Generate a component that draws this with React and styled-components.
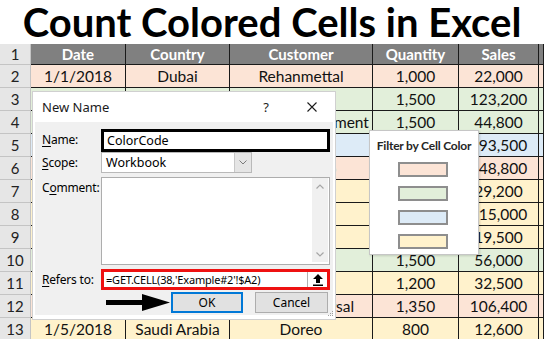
import React from 'react';
import styled, { createGlobalStyle } from 'styled-components';

const GlobalStyle = createGlobalStyle`
  html, body { margin: 0; padding: 0; background: #ffffff; }
  body { width: 544px; height: 339px; overflow: hidden; }
  * { box-sizing: border-box; }
`;

const fills = {
    peach: '#fce4d6',
    green: '#e2efda',
    blue: '#ddebf7',
    yellow: '#fff2cc',
};

// cells that sit fully under the dialog / filter panel are left blank
const rows = [
    { fill: 'peach', cells: ['1/1/2018', 'Dubai', 'Rehanmettal', '1,000', '22,000'] },
    { fill: 'green', cells: ['', '', '', '1,500', '123,200'] },
    { fill: 'green', cells: ['', '', 'Vivid Entertainment', '1,500', '44,800'] },
    { fill: 'blue', cells: ['', '', '', '', '193,500'] },
    { fill: 'peach', cells: ['', '', 'Parle Agro', '', '148,800'] },
    { fill: 'yellow', cells: ['', '', '', '', '29,200'] },
    { fill: 'yellow', cells: ['', '', '', '', '115,000'] },
    { fill: 'yellow', cells: ['', '', '', '', '19,500'] },
    { fill: 'green', cells: ['', '', '', '1,500', '56,000'] },
    { fill: 'yellow', cells: ['', '', '', '1,200', '32,500'] },
    { fill: 'peach', cells: ['', '', 'Alpha Universal', '1,350', '106,400'] },
    { fill: 'yellow', cells: ['1/5/2018', 'Saudi Arabia', 'Doreo', '800', '12,600'] },
];

const headers = ['Date', 'Country', 'Customer', 'Quantity', 'Sales'];

const Page = styled.div`
    position: relative;
    width: 544px;
    height: 339px;
    overflow: hidden;
    background: #ffffff;
    font-family: Lato, "Liberation Sans", sans-serif;
`;

const Title = styled.h1`
    margin: 0;
    height: 44px;
    padding-top: 1px;
    line-height: 43px;
    text-align: center;
    font-size: 40px;
    font-weight: 700;
    color: #000000;
    white-space: nowrap;
`;

const Sheet = styled.div`
    display: grid;
    grid-template-columns: 31px 95px 104px 143px 86px 80px 5px;
    grid-template-rows: 21px;
    grid-auto-rows: 23px;
`;

const RowNum = styled.div`
    background: #e6e6e6;
    border-right: 1px solid #c4c4c4;
    border-bottom: 1px solid #c4c4c4;
    color: #222222;
    font-size: 15px;
    display: flex;
    align-items: center;
    justify-content: center;
`;

const HeadCell = styled.div`
    background: #808080;
    color: #ffffff;
    font-weight: 700;
    font-size: 15px;
    border-right: 1px solid #1a1a1a;
    border-bottom: 1px solid #1a1a1a;
    display: flex;
    align-items: center;
    justify-content: center;
`;

const Cell = styled.div`
    background: ${({ $fill }) => fills[$fill]};
    color: #111111;
    font-size: 15.5px;
    border-right: 1px solid #1a1a1a;
    border-bottom: 1px solid #1a1a1a;
    display: flex;
    align-items: center;
    justify-content: center;
    white-space: nowrap;
`;

const Dialog = styled.div`
    position: absolute;
    left: 32px;
    top: 91px;
    width: 304px;
    height: 229px;
    background: #ffffff;
    border: 1px solid #d0d0d0;
    display: flex;
    flex-direction: column;
    font-family: "Noto Sans", "Liberation Sans", sans-serif;
    font-size: 12px;
    color: #000000;
`;

const TitleBar = styled.div`
    height: 30px;
    display: flex;
    align-items: center;
    padding-left: 9px;
    color: #1b1b1b;
`;

const TitleText = styled.span`
    flex: 1;
    font-size: 13px;
`;

const Help = styled.span`
    font-size: 13px;
    margin-right: 38px;
`;

const CloseIcon = styled.svg`
    margin-right: 18px;
`;

const Body = styled.div`
    position: relative;
    flex: 1;
    margin: 0 2px 4px 2px;
    background: #f0f0f0;
    padding: 7px 3px 0 7px;
    display: flex;
    flex-direction: column;
`;

const FieldRow = styled.div`
    display: grid;
    grid-template-columns: 59px 1fr;
    margin-top: ${({ $top }) => $top}px;
    height: ${({ $h }) => $h}px;
`;

const Label = styled.div`
    padding-top: 3px;
    line-height: 15px;
    font-size: 12px;
    letter-spacing: -0.2px;
    white-space: nowrap;
    u { text-decoration-thickness: 1px; text-underline-offset: 2px; }
`;

const NameInput = styled.div`
    border: 3px solid #000000;
    background: #ffffff;
    padding-left: 3px;
    display: flex;
    align-items: center;
    font-size: 12.5px;
`;

const Select = styled.div`
    width: 151px;
    border: 1px solid #b9b9b9;
    background: #ffffff;
    display: flex;
    align-items: stretch;
`;

const SelectValue = styled.div`
    flex: 1;
    padding-left: 4px;
    display: flex;
    align-items: center;
    font-size: 12.5px;
`;

const SelectButton = styled.div`
    width: 17px;
    background: #e5e5e5;
    border-left: 1px solid #c8c8c8;
    display: flex;
    align-items: center;
    justify-content: center;
`;

const TextArea = styled.div`
    border: 1px solid #adadad;
    background: #ffffff;
    display: flex;
    justify-content: flex-end;
    padding: 0 1px 2px 0;
`;

const ScrollTrack = styled.div`
    width: 16px;
    background: #f0f0f0;
    display: flex;
    flex-direction: column;
    justify-content: space-between;
    align-items: center;
    padding: 6px 0 5px;
`;

const RefInput = styled.div`
    border: 3px solid #ee1111;
    background: #ffffff;
    display: flex;
    align-items: stretch;
`;

const RefValue = styled.div`
    flex: 1;
    padding-left: 2px;
    display: flex;
    align-items: center;
    font-size: 11px;
    letter-spacing: -0.2px;
    white-space: nowrap;
    overflow: hidden;
`;

const CollapseButton = styled.div`
    width: 20px;
    border-left: 1px solid #b0b0b0;
    display: flex;
    align-items: center;
    justify-content: center;
`;

const ButtonRow = styled.div`
    margin-top: 2px;
    height: 21px;
    display: flex;
    justify-content: flex-end;
    align-items: center;
    padding-right: 2px;
`;

const Button = styled.div`
    width: ${({ $w }) => $w}px;
    height: 21px;
    margin-left: ${({ $gap }) => $gap}px;
    background: #e1e1e1;
    border: ${({ $primary }) => ($primary ? '2px solid #0078d7' : '1px solid #adadad')};
    display: flex;
    align-items: center;
    justify-content: center;
    font-size: 12px;
    color: #000000;
`;

const Grip = styled.svg`
    position: absolute;
    right: -1px;
    bottom: -2px;
`;

const FilterBox = styled.div`
    position: absolute;
    left: 369px;
    top: 130px;
    width: 110px;
    height: 125px;
    background: #ffffff;
    border: 1px solid #c6c6c6;
    box-shadow: 1px 1px 2px rgba(0, 0, 0, 0.15);
    display: flex;
    flex-direction: column;
    align-items: center;
    padding-top: 7px;
    font-family: Lato, "Liberation Sans", sans-serif;
`;

const FilterTitle = styled.div`
    font-size: 12px;
    font-weight: 700;
    letter-spacing: -0.2px;
    color: #262626;
    white-space: nowrap;
    margin-bottom: 9px;
`;

const Swatches = styled.div`
    display: flex;
    flex-direction: column;
    gap: 9px;
    margin-left: -3px;
`;

const Swatch = styled.div`
    width: 50px;
    height: 15px;
    background: ${({ $fill }) => fills[$fill]};
    border: 2px solid #8e8e8e;
`;

const App = () => {
    return (
        <Page>
            <GlobalStyle />
            <Title>Count Colored Cells in Excel</Title>
            <Sheet>
                <RowNum>1</RowNum>
                {headers.map((h) => (
                    <HeadCell key={h}>{h}</HeadCell>
                ))}
                <HeadCell />
                {rows.map((row, i) => (
                    <React.Fragment key={i}>
                        <RowNum>{i + 2}</RowNum>
                        {row.cells.map((c, j) => (
                            <Cell key={j} $fill={row.fill}>{c}</Cell>
                        ))}
                        <Cell $fill={row.fill} />
                    </React.Fragment>
                ))}
            </Sheet>

            <Dialog>
                <TitleBar>
                    <TitleText>New Name</TitleText>
                    <Help>?</Help>
                    <CloseIcon width="10" height="10" viewBox="0 0 10 10">
                        <path d="M0.5 0.5 L9.5 9.5 M9.5 0.5 L0.5 9.5" stroke="#1b1b1b" strokeWidth="1.1" />
                    </CloseIcon>
                </TitleBar>
                <Body>
                    <FieldRow $top={0} $h={22}>
                        <Label><u>N</u>ame:</Label>
                        <NameInput>ColorCode</NameInput>
                    </FieldRow>
                    <FieldRow $top={1} $h={21}>
                        <Label><u>S</u>cope:</Label>
                        <Select>
                            <SelectValue>Workbook</SelectValue>
                            <SelectButton>
                                <svg width="8" height="5" viewBox="0 0 8 5">
                                    <path d="M0.5 0.5 L4 4 L7.5 0.5" fill="none" stroke="#7a7a7a" strokeWidth="1" />
                                </svg>
                            </SelectButton>
                        </Select>
                    </FieldRow>
                    <FieldRow $top={4} $h={88}>
                        <Label>C<u>o</u>mment:</Label>
                        <TextArea>
                            <ScrollTrack>
                                <svg width="8" height="5" viewBox="0 0 8 5">
                                    <path d="M0.5 4.5 L4 1 L7.5 4.5" fill="none" stroke="#a6a6a6" strokeWidth="1.2" />
                                </svg>
                                <svg width="8" height="5" viewBox="0 0 8 5">
                                    <path d="M0.5 0.5 L4 4 L7.5 0.5" fill="none" stroke="#a6a6a6" strokeWidth="1.2" />
                                </svg>
                            </ScrollTrack>
                        </TextArea>
                    </FieldRow>
                    <FieldRow $top={4} $h={21}>
                        <Label><u>R</u>efers to:</Label>
                        <RefInput>
                            <RefValue>=GET.CELL(38,'Example#2'!$A2)</RefValue>
                            <CollapseButton>
                                <svg width="10" height="12" viewBox="0 0 10 12">
                                    <path d="M5 0 L10 5 L7 5 L7 9 L3 9 L3 5 L0 5 Z" fill="#000000" />
                                    <rect x="0" y="10.5" width="10" height="1.5" fill="#000000" />
                                </svg>
                            </CollapseButton>
                        </RefInput>
                    </FieldRow>
                    <ButtonRow>
                        <svg width="64" height="17" viewBox="0 0 64 17">
                            <rect x="0" y="6" width="38" height="5" fill="#000000" />
                            <path d="M36 0 L64 8.5 L36 17 Z" fill="#000000" />
                        </svg>
                        <Button $w={72} $gap={1} $primary>OK</Button>
                        <Button $w={73} $gap={12}>Cancel</Button>
                    </ButtonRow>
                    <Grip width="8" height="8" viewBox="0 0 8 8">
                        <rect x="6" y="2" width="1" height="1" fill="#a0a0a0" />
                        <rect x="4" y="4" width="1" height="1" fill="#a0a0a0" />
                        <rect x="6" y="4" width="1" height="1" fill="#a0a0a0" />
                        <rect x="2" y="6" width="1" height="1" fill="#a0a0a0" />
                        <rect x="4" y="6" width="1" height="1" fill="#a0a0a0" />
                        <rect x="6" y="6" width="1" height="1" fill="#a0a0a0" />
                    </Grip>
                </Body>
            </Dialog>

            <FilterBox>
                <FilterTitle>Filter by Cell Color</FilterTitle>
                <Swatches>
                    <Swatch $fill="peach" />
                    <Swatch $fill="green" />
                    <Swatch $fill="blue" />
                    <Swatch $fill="yellow" />
                </Swatches>
            </FilterBox>
        </Page>
    );
};

export default App;
